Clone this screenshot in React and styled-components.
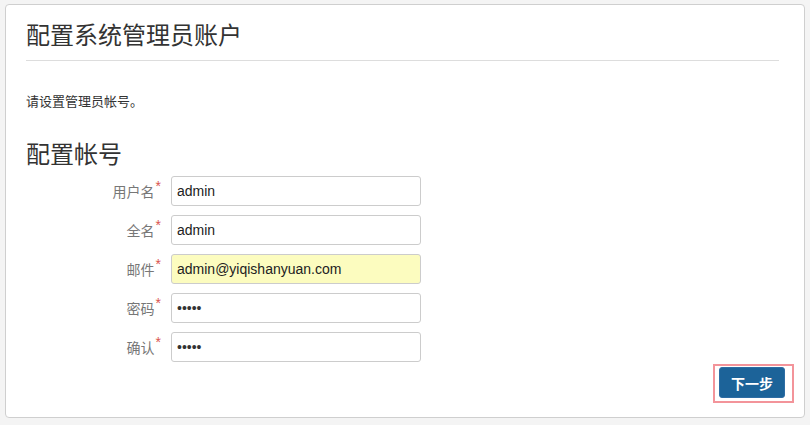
import React from "react";
import styled, { createGlobalStyle } from "styled-components";

const Global = createGlobalStyle`
  html, body { margin: 0; padding: 0; background: #f4f4f4; }
  body { font-family: "Liberation Sans", "Noto Sans CJK SC", sans-serif; color: #333; }
  * { box-sizing: border-box; }
`;

const Card = styled.div`
  margin: 4px 5px 0 5px;
  width: 800px;
  height: 414px;
  background: #fff;
  border: 1px solid #cfcfcf;
  border-radius: 4px;
  padding: 0 20px 14px 20px;
  display: flex;
  flex-direction: column;
`;

const Header = styled.div`
  margin-right: 5px;
  padding: 15px 0 12px;
  border-bottom: 1px solid #ddd;
`;

const Title = styled.h1`
  margin: 0;
  font-size: 24px;
  font-weight: 400;
  line-height: 28px;
  color: #333;
  font-family: "Noto Sans CJK SC", sans-serif;
`;

const Intro = styled.p`
  margin: 30px 0 0;
  font-size: 13px;
  line-height: 20px;
  color: #333;
  font-family: "Noto Sans CJK SC", sans-serif;
`;

const Section = styled.h2`
  margin: 28px 0 0;
  font-size: 24px;
  font-weight: 400;
  line-height: 28px;
  color: #333;
  font-family: "Noto Sans CJK SC", sans-serif;
`;

const Form = styled.div`
  margin-top: 9px;
  display: flex;
  flex-direction: column;
  gap: 9px;
`;

const Row = styled.div`
  display: grid;
  grid-template-columns: 137px 250px;
  column-gap: 8px;
  align-items: center;
`;

const Label = styled.label`
  text-align: right;
  font-size: 14px;
  line-height: 20px;
  color: #777;
  font-family: "Noto Sans CJK SC", sans-serif;
  padding-right: 2px;
`;

const Star = styled.span`
  color: #d9534f;
  font-size: 14px;
  font-family: "Liberation Sans", sans-serif;
  position: relative;
  top: -6px;
  margin-left: 1px;
`;

const Input = styled.div`
  height: 30px;
  border: 1px solid #ccc;
  border-radius: 3px;
  background: ${(p) => (p.$filled ? "#fcfcbf" : "#fff")};
  padding: 0 5px;
  display: flex;
  align-items: center;
  font-size: 14px;
  color: #222;
  font-family: "Liberation Sans", sans-serif;
`;

const Dots = styled.span`
  font-size: 14px;
  color: #333;
`;

const Footer = styled.div`
  margin-top: auto;
  margin-right: -10px;
  display: flex;
  justify-content: flex-end;
`;

const FocusRing = styled.span`
  display: inline-flex;
  padding: 1px 7px 3px 4px;
  border: 2px solid #f3949a;
`;

const Button = styled.button`
  width: 66px;
  height: 31px;
  background: #1c6399;
  border: 1px solid #2e6da4;
  border-radius: 3px;
  color: #fff;
  font-size: 14px;
  font-weight: 700;
  font-family: "Noto Sans CJK SC", sans-serif;
  outline: none;
  padding: 0;
`;

const fields = [
  { label: "用户名", value: "admin" },
  { label: "全名", value: "admin" },
  { label: "邮件", value: "admin@yiqishanyuan.com", filled: true },
  { label: "密码", value: "•••••", secret: true },
  { label: "确认", value: "•••••", secret: true },
];

export default function App() {
  return (
    <>
      <Global />
      <Card>
        <Header>
          <Title>配置系统管理员账户</Title>
        </Header>
        <Intro>请设置管理员帐号。</Intro>
        <Section>配置帐号</Section>
        <Form>
          {fields.map((f) => (
            <Row key={f.label}>
              <Label>
                {f.label}
                <Star>*</Star>
              </Label>
              <Input $filled={f.filled}>
                {f.secret ? <Dots>{f.value}</Dots> : f.value}
              </Input>
            </Row>
          ))}
        </Form>
        <Footer>
          <FocusRing>
            <Button>下一步</Button>
          </FocusRing>
        </Footer>
      </Card>
    </>
  );
}
